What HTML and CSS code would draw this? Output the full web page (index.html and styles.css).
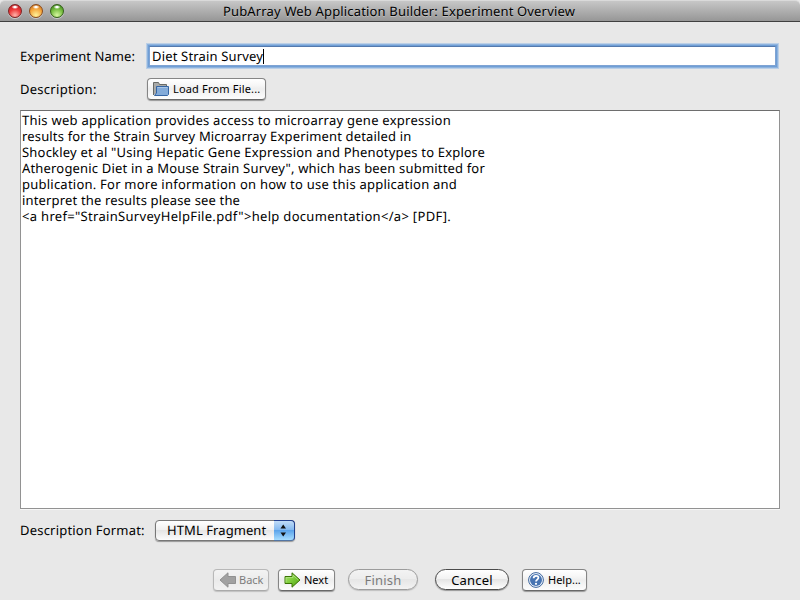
FILE: index.html
```html
<!DOCTYPE html>
<html lang="en">
<head>
<meta charset="utf-8">
<title>PubArray Web Application Builder: Experiment Overview</title>
<link rel="stylesheet" href="styles.css">
</head>
<body>
<div class="window">
  <header class="titlebar">
    <div class="lights"><i class="light red"></i><i class="light amber"></i><i class="light green"></i></div>
    <h1><span>PubArray Web Application Builder: Experiment Overview</span></h1>
  </header>
  <main class="content">
    <div class="row name-row">
      <label class="label t-name">Experiment Name:</label>
      <div class="field"><span class="t-value">Diet Strain Survey</span><i class="caret"></i></div>
    </div>
    <div class="row desc-row">
      <label class="label t-desc">Description:</label>
      <button class="btn load">
        <svg width="17" height="16" viewBox="0 0 17 16"><path d="M.5 14V1.5H5.5L6.5 3.5H13.5V7" fill="#a9aaa8" stroke="#686a67"/><path d="M3.5 5.5H15.5V13.5L14.5 14.5H1.5L3.5 12Z" fill="#83abd9" stroke="#3465a4"/><path d="M4.5 6.5H14.5" stroke="#a9c5e5"/></svg>
        <span class="t-load">Load From File...</span>
      </button>
    </div>
    <div class="textarea">
      <div class="l1">This web application provides access to microarray gene expression</div>
      <div class="l2">results for the Strain Survey Microarray Experiment detailed in</div>
      <div class="l3">Shockley et al "Using Hepatic Gene Expression and Phenotypes to Explore</div>
      <div class="l4">Atherogenic Diet in a Mouse Strain Survey", which has been submitted for</div>
      <div class="l5">publication. For more information on how to use this application and</div>
      <div class="l6">interpret the results please see the</div>
      <div class="l7">&lt;a href="StrainSurveyHelpFile.pdf"&gt;help documentation&lt;/a&gt; [PDF].</div>
    </div>
    <div class="row format-row">
      <label class="label t-format">Description Format:</label>
      <div class="select"><span class="t-html">HTML Fragment</span>
        <b><svg width="20" height="20" viewBox="0 0 20 20"><path d="M6.5 7.5H12L9.2 3.5ZM6.5 11.5H12L9.2 15.5Z" fill="#111"/></svg></b>
      </div>
    </div>
    <footer class="actions">
      <button class="btn back disabled">
        <svg width="18" height="16" viewBox="0 0 18 16"><path d="M1 8L9 .8V4.5H16.5V11.5H9V15.2Z" fill="#555" stroke="#333"/></svg>
        <span class="t-back">Back</span></button>
      <button class="btn next">
        <svg width="18" height="16" viewBox="0 0 18 16"><defs><linearGradient id="g" x2="1" y2="1"><stop stop-color="#b0e67d"/><stop offset=".45" stop-color="#80ce3d"/><stop offset="1" stop-color="#4a9d08"/></linearGradient></defs><path d="M16 8L8 .8V4.5H1V11.5H8V15.2Z" fill="url(#g)" stroke="#3a7304"/><path d="M2 10.5V5.5H9V3.2L14.4 8" fill="none" stroke="#b5e58a" stroke-opacity=".7"/></svg>
        <span class="t-next">Next</span></button>
      <button class="pill finish disabled"><span class="t-finish">Finish</span></button>
      <button class="pill cancel"><span class="t-cancel">Cancel</span></button>
      <button class="btn help">
        <svg width="16" height="16" viewBox="0 0 16 16"><circle cx="8" cy="8" r="7.4" fill="#f3f7fc" stroke="#3c659d"/><circle cx="8" cy="8" r="6" fill="#4774b2"/><path d="M5.6 6.2C5.7 3 10.5 3.1 10.4 5.8C10.4 7.6 8 7.6 8 9.5" fill="none" stroke="#fff" stroke-width="1.8"/><circle cx="8" cy="11.8" r="1.1" fill="#fff"/></svg>
        <span class="t-help">Help...</span></button>
    </footer>
  </main>
</div>
</body>
</html>
```

FILE: styles.css
```css
* { box-sizing: border-box; }
body { margin: 0; background: #e8e8e8; color: #000; font: 13px/16px "Noto Sans", sans-serif; text-rendering: geometricPrecision; }
.window { width: 800px; height: 600px; overflow: hidden; background: #e8e8e8; display: flex; flex-direction: column; }
svg { display: block; flex: none; }
span { white-space: nowrap; }
.titlebar { height: 22px; flex: none; position: relative; display: flex; align-items: center; justify-content: center; border-top: 1px solid #dadada; border-bottom: 1px solid #404040; background: linear-gradient(#c7c7c7, #969696); border-radius: 5px 5px 0 0; }
.titlebar h1 { margin: 0 2px 0 0; font-size: 13px; font-weight: 400; line-height: 16px; letter-spacing: .16px; text-shadow: 0 1px 0 rgba(255,255,255,.35); }
.lights { position: absolute; left: 8px; top: 3px; display: flex; gap: 7px; }
.light { width: 14px; height: 14px; border-radius: 50%; box-shadow: 0 1px 0 rgba(255,255,255,.45); border: 1px solid; }
.red { border-color: #7d2323; background: radial-gradient(ellipse 3.5px 2px at 50% 17%, #fff 30%, transparent), radial-gradient(circle at 50% 85%, #ffb3aa, #ee3b3b 50%, #b4161c); }
.amber { border-color: #8a4b1c; background: radial-gradient(ellipse 3.5px 2px at 50% 17%, #fff 30%, transparent), radial-gradient(circle at 50% 85%, #fff39a, #f5a63c 55%, #bd6216); }
.green { border-color: #356019; background: radial-gradient(ellipse 3.5px 2px at 50% 17%, #fff 30%, transparent), radial-gradient(circle at 50% 85%, #d7f7a0, #73bb3d 55%, #32751b); }
.content { flex: 1; padding: 22px 20px 8px; display: flex; flex-direction: column; }
.row { display: flex; align-items: center; flex: none; }
.label { flex: none; }
.name-row { height: 24px; }
.name-row .label, .desc-row .label { width: 128px; }
.field { flex: 1; height: 20px; margin: 0 4px 0 1px; padding-left: 2px; display: flex; align-items: center; background: #fff; border: 1px solid #7fa3d3; border-top-color: #5479ad; box-shadow: 0 0 0 1px #6f9fd6, 0 0 0 2px #8fb3de, 0 0 0 3px rgba(150,187,230,.55); }
.caret { width: 1px; height: 15px; background: #000; }
.desc-row { height: 24px; margin-top: 9px; }
.btn, .pill { font: 11px/14px "Noto Sans", sans-serif; color: #000; margin: 0; display: flex; align-items: center; flex: none; }
.btn { height: 22px; padding: 0 5px; border: 1px solid #858585; border-bottom-color: #686868; border-radius: 4px; background: linear-gradient(#fff, #f7f7f7 30%, #eee 50%, #fdfdfd); box-shadow: 0 1px 1px rgba(0,0,0,.35); }
.load { width: 119px; margin-left: -1px; gap: 3px; }
.textarea { height: 399px; margin-top: 9px; flex: none; border: 1px solid #929292; border-top-color: #6e6e6e; background: #fff; box-shadow: 0 1px 0 #f7f7f7; padding: 1px; white-space: nowrap; }
.format-row { height: 22px; margin-top: 10px; }
.t-format { width: 135px; }
.select { width: 140px; height: 21px; display: flex; align-items: center; justify-content: space-between; padding-left: 11px; border: 1px solid #777; border-radius: 4px; background: linear-gradient(#fff, #f0f0f0 48%, #e5e5e5 50%, #fcfcfc); box-shadow: 0 1px 1px rgba(0,0,0,.35); }
.select b { width: 21px; height: 21px; margin: -1px; border: 1px solid #223f8c; border-bottom-color: #5275a4; border-left: 0; border-radius: 0 4px 4px 0; background: linear-gradient(#c1dcf7, #82b8f0 48%, #5ca4ea 50%, #a6ddff); }
.actions { display: flex; margin-top: 28px; padding-left: 193px; height: 23px; }
.next { width: 57px; margin-left: 9px; }
.back { width: 56px; }
.btn.next, .btn.back { gap: 2px; }
.help { width: 65px; margin-left: 13px; gap: 4px; }
.disabled { opacity: .48; }
.pill { height: 21px; border: 1px solid #4a4a4a; border-radius: 11px; font-size: 13px; justify-content: center; padding: 0; background: linear-gradient(#fff, #f2f2f2 48%, #e5e5e5 50%, #fff); box-shadow: 0 1px 1px rgba(0,0,0,.35); }
.finish { width: 70px; margin-left: 13px; }
.cancel { width: 74px; margin-left: 17px; }
/* tracking per text run */
.t-name { letter-spacing: .07px; }
.t-value { letter-spacing: .17px; }
.t-desc { letter-spacing: .27px; }
.t-load { letter-spacing: .17px; }
.t-format { letter-spacing: .2px; }
.t-html { letter-spacing: .08px; }
.t-finish, .t-cancel { letter-spacing: .2px; }
.l1 { letter-spacing: .25px; }
.l2 { letter-spacing: .16px; }
.l3 { letter-spacing: .2px; }
.l4 { letter-spacing: .175px; }
.l5 { letter-spacing: .23px; }
.l6 { letter-spacing: .16px; }
.l7 { letter-spacing: .31px; }
```
